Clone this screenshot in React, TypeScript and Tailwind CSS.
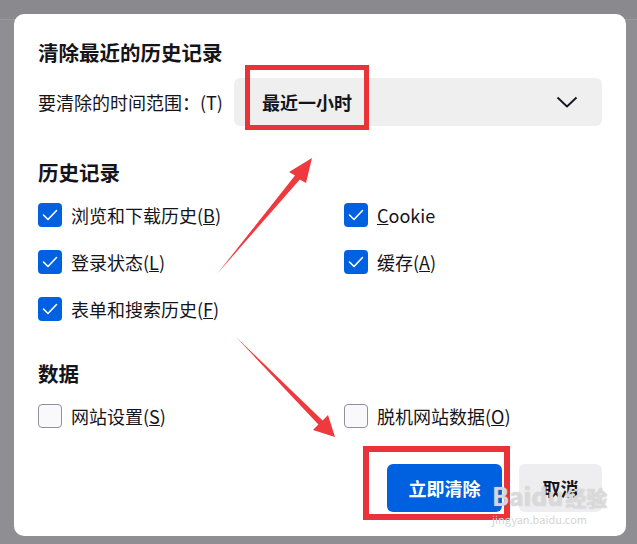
import { ReactNode } from 'react'

function Check({ checked, label }: { checked?: boolean, label: ReactNode }) {
    return <div className="flex items-center h-[24px] gap-[9px]">
        {
            checked ?
            <div className="w-[24px] h-[24px] rounded-[4px] bg-[#0061e0] flex items-center justify-center">
                <svg width="16" height="12" viewBox="0 0 16 12" fill="none">
                    <path d="M1.5 6 L6 10.5 L14.5 1.5" stroke="white" strokeWidth="1.6" strokeLinecap="round" strokeLinejoin="round" />
                </svg>
            </div> :
            <div className="w-[24px] h-[24px] rounded-[4px] bg-[#f9f9fb] border border-[#8f8f9d]" />
        }
        <span className="text-[18px] leading-[24px] text-[#15141a]">{ label }</span>
    </div>
}

export default function App() {
    return <div className="relative w-[637px] h-[544px] overflow-hidden bg-[#8f8f93] font-['Noto_Sans_CJK_SC',sans-serif]">
        <div className="h-[20px] bg-[#8a8a8e] border-b border-[#9a9a9d]" />
        <div className="absolute left-[14px] top-[14px] w-[612px] h-[522px] bg-white rounded-[10px] px-[24px] pt-[24px] text-[#15141a]">
            <div className="text-[20.5px] leading-[28px] font-bold">清除最近的历史记录</div>
            <div className="flex items-center mt-[12px]">
                <div className="w-[196px] text-[18px] leading-[24px]">要清除的时间范围：(T)</div>
                <div className="flex-1 h-[48px] rounded-[6px] bg-[#efeff0] flex items-center justify-between pl-[28px] pr-[24px]">
                    <span className="text-[18px] font-bold">最近一小时</span>
                    <svg width="22" height="12" viewBox="0 0 22 12" fill="none">
                        <path d="M1.5 1.5 L11 10.5 L20.5 1.5" stroke="#15141a" strokeWidth="1.8" strokeLinejoin="round" />
                    </svg>
                </div>
            </div>

            <div className="text-[20.5px] leading-[28px] font-bold mt-[32px]">历史记录</div>
            <div className="grid grid-cols-[306px_1fr] gap-y-[23px] mt-[17px]">
                <Check checked label={ <>浏览和下载历史(<u>B</u>)</> } />
                <Check checked label={ <><u>C</u>ookie</> } />
                <Check checked label={ <>登录状态(<u>L</u>)</> } />
                <Check checked label={ <>缓存(<u>A</u>)</> } />
                <Check checked label={ <>表单和搜索历史(<u>F</u>)</> } />
            </div>

            <div className="text-[20.5px] leading-[28px] font-bold mt-[38px]">数据</div>
            <div className="grid grid-cols-[306px_1fr] mt-[17px]">
                <Check label={ <>网站设置(<u>S</u>)</> } />
                <Check label={ <>脱机网站数据(<u>O</u>)</> } />
            </div>

            <div className="flex justify-end gap-[17px] mt-[36px]">
                <div className="w-[115px] h-[48px] rounded-[6px] bg-[#0061e0] text-white text-[18px] font-bold flex items-center justify-center">立即清除</div>
                <div className="w-[83px] h-[48px] rounded-[6px] bg-[#eeeef0] text-[18px] font-bold flex items-center justify-center">取消</div>
            </div>
        </div>

        {/* annotations */}
        <div className="absolute left-[245px] top-[65px] w-[124px] h-[65px] border-[5px] border-[#ea3339]" />
        <div className="absolute left-[363px] top-[446px] w-[147px] h-[74px] border-[6px] border-[#ea3339]" />
        <svg className="absolute left-0 top-0" width="637" height="544" viewBox="0 0 637 544">
            <polygon points="217,274 295,175.6 289,172 312,158 306,183 299.8,179.4" fill="#ee3a3f" />
            <polygon points="236,337 322.6,420.4 328,415 335,437 313,430 318.4,424.6" fill="#ee3a3f" />
        </svg>

        {/* watermark */}
        <div className="absolute left-[492px] top-[482px] text-[25px] leading-[26px] font-bold text-white/60 [text-shadow:0_0_1px_#a0a0a0]">Baidu<span className="text-[21px] ml-[2px]">经验</span></div>
        <div className="absolute left-[492px] top-[512px] text-[11px] leading-[14px] text-[#d4d4d4]">jingyan.baidu.com</div>
    </div>
}
